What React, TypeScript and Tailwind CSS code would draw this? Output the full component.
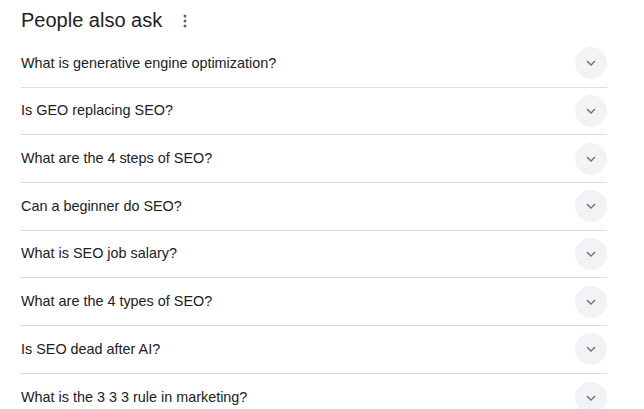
const QUESTIONS = [
  "What is generative engine optimization?",
  "Is GEO replacing SEO?",
  "What are the 4 steps of SEO?",
  "Can a beginner do SEO?",
  "What is SEO job salary?",
  "What are the 4 types of SEO?",
  "Is SEO dead after AI?",
  "What is the 3 3 3 rule in marketing?",
];

function Chevron() {
  return (
    <svg width="18" height="18" viewBox="0 0 24 24" fill="#70757a">
      <path d="M16.59 8.59 12 13.17 7.41 8.59 6 10l6 6 6-6z" />
    </svg>
  );
}

export default function App() {
  return (
    <div className="h-[409px] w-[644px] overflow-hidden bg-white font-['Liberation_Sans',Arial,sans-serif]">
      <div className="w-[586px] ml-[21px]">
        <div className="flex h-[40px] items-center gap-[21px]">
          <h2 className="text-[20px] leading-[26px] text-[#202124]">People also ask</h2>
          <svg width="4" height="14" viewBox="0 0 4 14" fill="#5f6368" className="mt-[1px]">
            <circle cx="2" cy="2" r="1.5" />
            <circle cx="2" cy="7" r="1.5" />
            <circle cx="2" cy="12" r="1.5" />
          </svg>
        </div>
        {QUESTIONS.map((q, i) => (
          <div
            key={q}
            className={`flex h-[47.7px] items-center justify-between ${i < QUESTIONS.length - 1 ? "border-b border-[#dadce0]" : ""}`}
          >
            <span className="text-[14.4px] text-[#202124]">{q}</span>
            <span className="flex h-[32px] w-[32px] items-center justify-center rounded-full bg-[#f1f3f4]">
              <Chevron />
            </span>
          </div>
        ))}
      </div>
    </div>
  );
}
